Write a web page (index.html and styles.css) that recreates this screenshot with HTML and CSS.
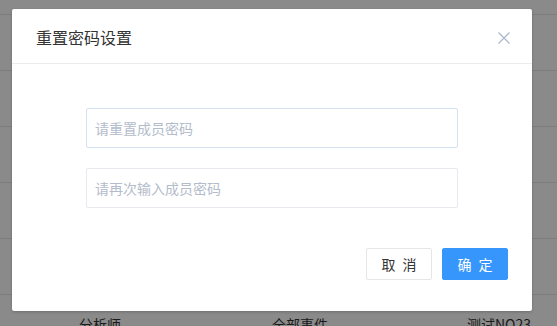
FILE: index.html
```html
<!DOCTYPE html>
<html lang="zh">
<head>
<meta charset="utf-8">
<link rel="stylesheet" href="styles.css">
</head>
<body>
<div class="table">
  <div class="row head"></div>
  <div class="row"></div>
  <div class="row"></div>
  <div class="row"></div>
  <div class="row"></div>
  <div class="row"></div>
  <div class="row cells"><span>分析师</span><span>全部事件</span><span>测试NO23</span></div>
</div>
<div class="mask"></div>
<div class="dialog">
  <div class="dialog-header">
    <span class="title">重置密码设置</span>
    <svg class="close" width="12" height="12" viewBox="0 0 12 12"><path d="M0.5 0.5 L11.5 11.5 M11.5 0.5 L0.5 11.5" stroke="#a9b6cc" stroke-width="1.2" fill="none"/></svg>
  </div>
  <div class="dialog-body">
    <div class="input focus">请重置成员密码</div>
    <div class="input">请再次输入成员密码</div>
  </div>
  <div class="dialog-footer">
    <button class="btn">取 消</button>
    <button class="btn primary">确 定</button>
  </div>
</div>
</body>
</html>
```
FILE: styles.css
```css
html, body {
  margin: 0;
  padding: 0;
  width: 557px;
  height: 326px;
  overflow: hidden;
  background: #fff;
  font-family: "Noto Sans CJK SC", "Liberation Sans", sans-serif;
}
.table {
  display: flex;
  flex-direction: column;
  width: 557px;
  overflow: hidden;
}
.row {
  height: 55px;
  border-bottom: 1px solid #e8e8e8;
  flex-shrink: 0;
}
.row.head {
  height: 14px;
}
.cells {
  display: grid;
  grid-template-columns: 200px 200px 157px;
  align-items: start;
  font-size: 14px;
  color: #333;
}
.cells span {
  text-align: center;
  padding-top: 19px;
  line-height: 20px;
}
.cells span:last-child {
  text-align: left;
  padding-left: 67px;
}
.mask {
  position: absolute;
  inset: 0;
  background: rgba(0, 0, 0, 0.46);
}
.dialog {
  position: absolute;
  left: 12px;
  top: 9px;
  width: 520px;
  height: 302px;
  background: #fff;
  border-radius: 2px;
  box-shadow: 0 1px 3px rgba(0,0,0,0.2);
  display: flex;
  flex-direction: column;
}
.dialog-header {
  height: 55px;
  border-bottom: 1px solid #e9ebef;
  display: flex;
  align-items: center;
  justify-content: space-between;
  padding: 0 22px 0 24px;
  box-sizing: border-box;
}
.title {
  font-size: 16px;
  color: #333;
  line-height: 22px;
  padding-top: 2px;
}
.close {
  margin-top: 4px;
}
.dialog-body {
  padding: 44px 74px 0 74px;
  display: flex;
  flex-direction: column;
  gap: 20px;
}
.input {
  height: 40px;
  box-sizing: border-box;
  border: 1px solid #e6e9ee;
  border-radius: 2px;
  padding-left: 8px;
  font-size: 14px;
  color: #b3bccb;
  display: flex;
  align-items: center;
}
.input.focus {
  border-color: #d3e1f0;
}
.dialog-footer {
  display: flex;
  justify-content: flex-end;
  gap: 10px;
  padding: 40px 24px 0 0;
}
.btn {
  width: 66px;
  height: 32px;
  box-sizing: border-box;
  border: 1px solid #e6e6e6;
  border-radius: 2px;
  background: #fff;
  color: #333;
  font-family: "Noto Sans CJK SC", "Liberation Sans", sans-serif;
  font-size: 14px;
  letter-spacing: 2px;
  padding: 0;
  text-indent: 2px;
}
.btn.primary {
  background: #3796fb;
  border-color: #3796fb;
  color: #fff;
}
```
